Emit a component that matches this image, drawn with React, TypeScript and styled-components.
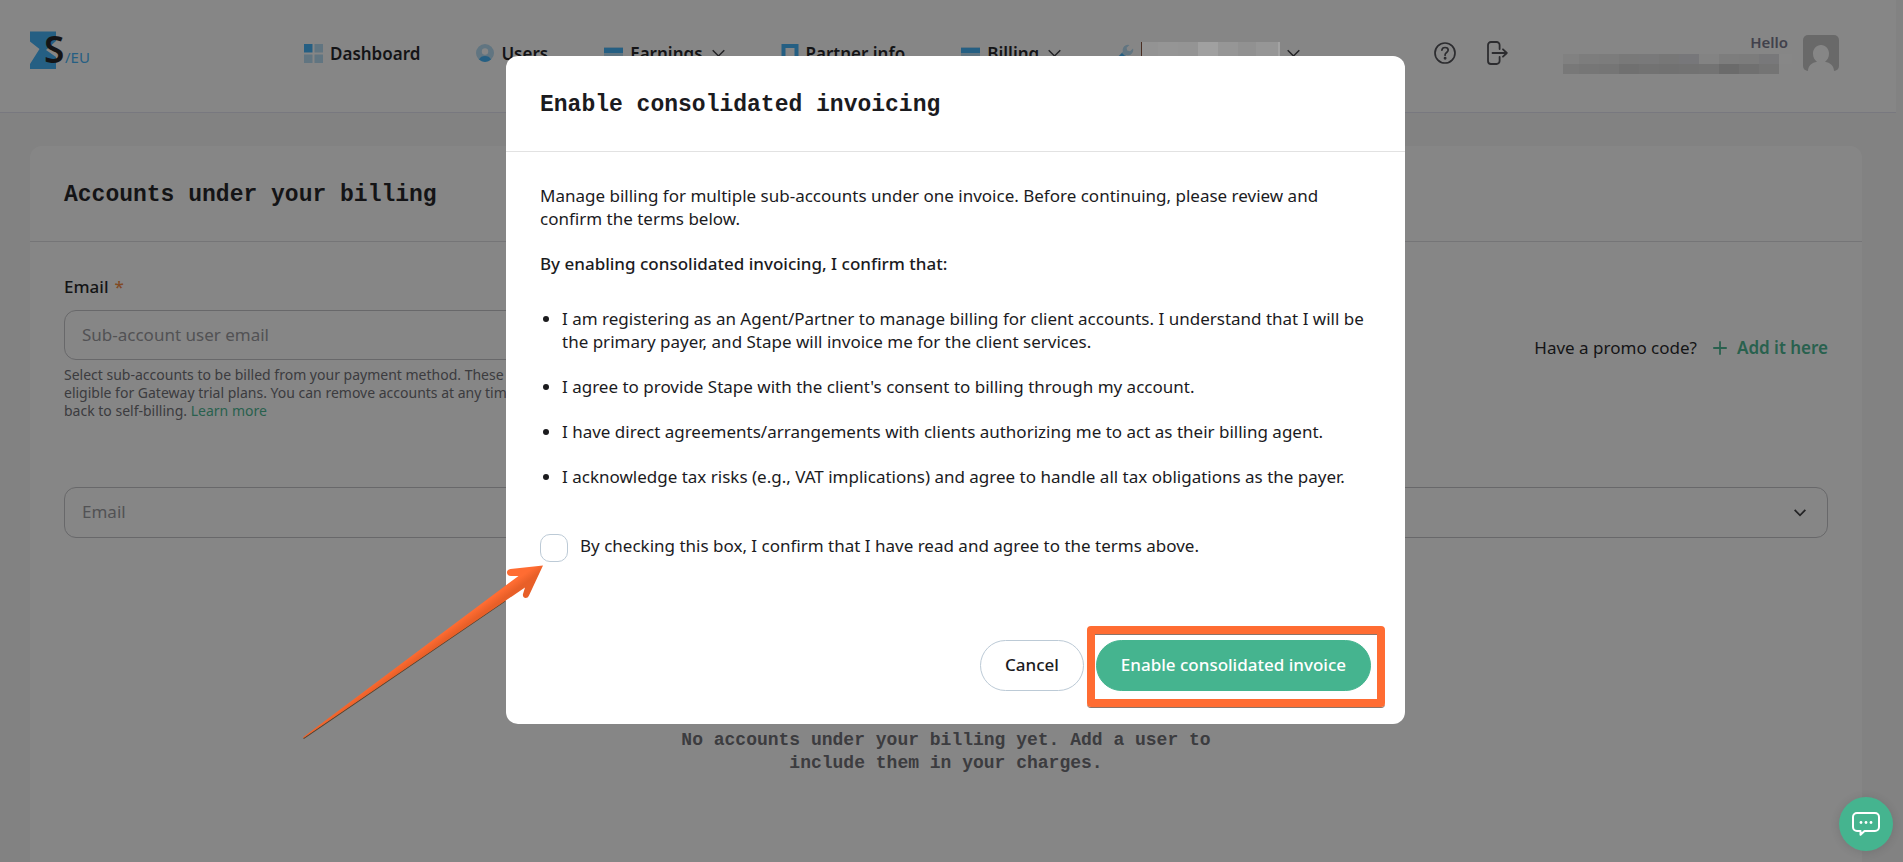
import React, { useState } from 'react';
import styled, { createGlobalStyle } from 'styled-components';

const sans = '"Noto Sans", "Open Sans", sans-serif';
const mono = '"Liberation Mono", "DejaVu Sans Mono", monospace';
const ink = '#1b1b1e';
const green = '#45b48f';
const orange = '#ff6c32';
const blue = '#3cb0f8';
const paleBlue = '#b4dcf4';

const GlobalStyle = createGlobalStyle`
  *, *::before, *::after { box-sizing: border-box; }
  body {
    margin: 0;
    background: #f7f7f7;
    color: ${ink};
    font: 400 17px/23px ${sans};
  }
  button, input, select { font: inherit; color: inherit; }
  button { cursor: pointer; }
  p, h1, h2, ul { margin: 0; padding: 0; }
  a { color: inherit; text-decoration: none; }
  svg { display: block; flex: none; }
`;

const Page = styled.div`
  display: flex;
  flex-direction: column;
  min-height: 100vh;
  padding-right: 7px;
`;

const TopBar = styled.header`
  display: flex;
  align-items: center;
  height: 113px;
  padding: 0 57px 6px 30px;
  background: #fff;
  border-bottom: 1px solid #e2e2f0;
`;

const Nav = styled.nav`
  display: flex;
  align-items: center;
  gap: 56px;
  margin-left: 210px;
`;

const NavLink = styled.a`
  display: flex;
  align-items: center;
  gap: 7px;
  font-weight: 600;
  white-space: nowrap;
`;

const NavLabel = styled.span<{ $open?: boolean }>`
  margin-right: ${(p) => (p.$open ? '2px' : '0')};
`;

const Tools = styled.div`
  display: flex;
  align-items: center;
  gap: 29px;
  margin-left: auto;
`;

const IconButton = styled.button`
  display: grid;
  place-items: center;
  padding: 0;
  border: 0;
  background: none;
`;

const User = styled.div`
  display: flex;
  align-items: center;
  gap: 11px;
  margin-left: 26px;
`;

const UserText = styled.div`
  display: grid;
  gap: 3px;
`;

const Hello = styled.span`
  padding-right: 4px;
  font-size: 15px;
  line-height: 18px;
  font-weight: 600;
  color: #75758a;
  text-align: right;
`;

/* Pixelated strip over private text; it stays above the dimmed backdrop. */
const Mosaic = styled.span<{ $rows: number; $h: number }>`
  position: relative;
  z-index: 15;
  display: grid;
  grid-auto-flow: column;
  grid-template-rows: repeat(${(p) => p.$rows}, ${(p) => p.$h}px);
`;

const Tile = styled.span<{ $w: number; $c: string }>`
  width: ${(p) => p.$w}px;
  background: ${(p) => p.$c};
`;

const Card = styled.main`
  display: flex;
  flex: 1;
  flex-direction: column;
  margin: 33px 34px 0 30px;
  background: #fff;
  border-radius: 12px 12px 0 0;
`;

const PanelHead = styled.div<{ $line: string }>`
  display: flex;
  align-items: center;
  height: 96px;
  padding: 2px 34px 0;
  border-bottom: 1px solid ${(p) => p.$line};
`;

const Title = styled.h2`
  font: 700 23px/30px ${mono};
`;

const CardBody = styled.div`
  padding: 33px 34px 24px;
`;

const FormRow = styled.div`
  display: flex;
  align-items: center;
  justify-content: space-between;
  gap: 40px;
`;

const Field = styled.div`
  display: flex;
  flex-direction: column;
  width: 50%;
`;

const Label = styled.label`
  display: flex;
  gap: 6px;
  margin-bottom: 12px;
  font-weight: 500;
`;

const Star = styled.span`
  color: #f5873c;
`;

const TextInput = styled.input`
  height: 50px;
  padding: 0 17px 2px;
  border: 1px solid #c2c2c6;
  border-radius: 12px;
  background: none;
  &::placeholder { color: #96969b; opacity: 1; }
`;

const Hint = styled.p`
  margin-top: 6px;
  font-size: 14px;
  line-height: 18px;
  color: #6a6a70;
  white-space: nowrap;
`;

const GreenLink = styled.a`
  color: ${green};
`;

const Promo = styled.div`
  display: flex;
  align-items: center;
  gap: 16px;
  white-space: nowrap;
`;

const AddButton = styled.button`
  display: flex;
  align-items: center;
  gap: 10px;
  padding: 0;
  border: 0;
  background: none;
  color: ${green};
  font-weight: 600;
`;

const SelectWrap = styled.div`
  display: grid;
  align-items: center;
  margin-top: 67px;
  > * { grid-area: 1 / 1; }
  > svg { justify-self: end; margin-right: 22px; pointer-events: none; }
`;

const Select = styled.select`
  height: 51px;
  padding: 0 17px 2px;
  border: 1px solid #c2c2c6;
  border-radius: 12px;
  background: none;
  color: #96969b;
  appearance: none;
`;

const Empty = styled.p`
  max-width: 560px;
  margin: 191px auto 0;
  font: 700 18px/23px ${mono};
  color: #6a6a70;
  text-align: center;
`;

const Backdrop = styled.div`
  position: fixed;
  inset: 0;
  z-index: 10;
  background: rgba(13, 13, 13, 0.5);
`;

const ModalLayer = styled.div`
  position: fixed;
  inset: 0;
  z-index: 20;
  display: flex;
  align-items: flex-start;
  justify-content: center;
  padding: 56px 0 0 8px;
`;

const Modal = styled.section`
  position: relative;
  width: 899px;
  max-width: 100%;
  background: #fff;
  border-radius: 12px;
`;

const ModalBody = styled.div`
  padding: 32px 34px 33px;
`;

const Lead = styled.p`
  margin-top: 22px;
  font-weight: 500;
`;

const Terms = styled.ul`
  display: grid;
  gap: 22px;
  margin-top: 32px;
  list-style: none;
`;

const Term = styled.li`
  display: flex;
  gap: 13px;
  padding-left: 3px;
  &::before {
    content: '';
    flex: none;
    width: 6px;
    height: 6px;
    margin-top: 9px;
    border-radius: 50%;
    background: ${ink};
  }
`;

const Consent = styled.label`
  display: flex;
  align-items: flex-start;
  gap: 12px;
  margin-top: 46px;
`;

const Checkbox = styled.input`
  width: 28px;
  height: 28px;
  margin: 0;
  border: 1px solid #bccad6;
  border-radius: 10px;
  background: #fff;
  appearance: none;
  &:checked { background: ${green}; border-color: ${green}; }
`;

const Actions = styled.div`
  display: flex;
  justify-content: flex-end;
  gap: 12px;
  margin-top: 78px;
`;

const PillButton = styled.button<{ $primary?: boolean }>`
  height: 51px;
  padding: 0 24px 2px;
  border: 1px solid ${(p) => (p.$primary ? green : '#bccad6')};
  border-radius: 26px;
  background: ${(p) => (p.$primary ? green : '#fff')};
  color: ${(p) => (p.$primary ? '#fff' : ink)};
  font-weight: 500;
`;

const Highlighted = styled.div`
  position: relative;
  &::after {
    content: '';
    position: absolute;
    inset: -14px -14px -16px -9px;
    border: 8px solid ${orange};
    border-radius: 4px;
    box-shadow: 0 1px 0 #8c7468, inset 0 1px 0 #8c7468;
    pointer-events: none;
  }
`;

const Pointer = styled.svg`
  position: absolute;
  left: -206px;
  top: 504px;
  pointer-events: none;
`;

const ChatButton = styled.button`
  position: fixed;
  right: 10px;
  bottom: 11px;
  z-index: 30;
  display: grid;
  place-items: center;
  width: 54px;
  height: 54px;
  padding: 0;
  border: 0;
  border-radius: 50%;
  background: ${green};
  box-shadow: 0 1px 10px rgba(0, 0, 0, 0.12);
`;

const Logo = () => (
  <svg width="64" height="66" viewBox="0 -8 64 66" role="img" aria-label="Stape EU">
    <path d="M0 3.500h26v37.500H0v-5l9.500-15L0 13.500z" fill={blue} />
    <path d="M26 13l-10 9 10 7z" fill="#fff" />
    <text x="14" y="35" fontFamily="Noto Sans" fontWeight="600" fontSize="37" fill={ink}>S</text>
    <text x="35" y="35" fontFamily="Noto Sans" fontSize="15" fill={blue}>/EU</text>
  </svg>
);

const DashboardIcon = () => (
  <svg width="19" height="19" viewBox="0 0 19 19">
    <path d="M0 0h8.500v8.500H0z" fill={blue} />
    <path d="M10.500 0H19v8.500h-8.500zM0 10.500h8.500V19H0zM10.500 10.500H19V19h-8.500z" fill={paleBlue} />
  </svg>
);

const UsersIcon = () => (
  <svg width="18" height="18" viewBox="0 0 18 18">
    <circle cx="9" cy="9" r="9" fill={paleBlue} />
    <circle cx="9" cy="7.500" r="3.200" fill="#fff" />
    <path d="M3 15.600C4 13 6.300 12 9 12s5 1 6 3.600A9 9 0 0 1 3 15.600z" fill={blue} />
  </svg>
);

const CardIcon = () => (
  <svg width="19" height="19" viewBox="0 0 19 19">
    <path d="M0 3h19v14H0z" fill={paleBlue} />
    <path d="M0 4h19v5H0z" fill={blue} />
    <path d="M10 12h6v2h-6z" fill="#fff" />
  </svg>
);

const PartnerIcon = () => (
  <svg width="18" height="18" viewBox="0 0 18 18">
    <path d="M2.500 2h13v14h-13z" fill="none" stroke={blue} strokeWidth="4" />
  </svg>
);

const WrenchIcon = () => (
  <svg width="17" height="18" viewBox="0 0 17 18">
    <path
      d="M12.500 1a5.200 5.200 0 0 0-6.600 6.500L1 12.500 4.500 16l5-4.900A5.200 5.200 0 0 0 16 4.600l-3 2.600-2.800-.700-.600-2.800z"
      fill={paleBlue}
    />
    <path d="M5 9l3.500 3.500-4 4L1 13z" fill={blue} />
  </svg>
);

const Chevron = ({ size = 13, weight = 1.5 }: { size?: number; weight?: number }) => (
  <svg width={size} height={size} viewBox="0 0 13 13" fill="none" stroke="#3a3a3e" strokeWidth={weight}>
    <path d="M.7 3.200l5.800 5.800 5.800-5.800" />
  </svg>
);

const HelpIcon = () => (
  <svg width="24" height="24" viewBox="0 0 24 24" fill="none" stroke="#4a4a50" strokeWidth="1.700" strokeLinecap="round">
    <circle cx="12" cy="12" r="10" />
    <path d="M8.900 9.200c.2-1.800 1.400-2.700 3.100-2.700 1.800 0 3.200 1 3.200 2.600 0 2.400-3.100 2.300-3.100 4.700v.4" />
    <circle cx="12.100" cy="17.300" r=".6" fill="#4a4a50" />
  </svg>
);

const LogoutIcon = () => (
  <svg width="22" height="24" viewBox="0 0 22 24" fill="none" stroke="#4a4a50" strokeWidth="1.800" strokeLinecap="round" strokeLinejoin="round">
    <path d="M13.600 8V4a3 3 0 0 0-3-3H5a3 3 0 0 0-3 3v16a3 3 0 0 0 3 3h5.600a3 3 0 0 0 3-3v-4M6.500 12h14.300M17 8.300l3.800 3.700L17 15.700" />
  </svg>
);

const Avatar = () => (
  <svg width="36" height="36" viewBox="0 0 36 36" role="img" aria-label="Profile">
    <rect width="36" height="36" rx="5" fill="#c5c5c5" />
    <path d="M18 10c4.500 0 8 3.700 8 8.500 0 4-1.700 6.600-4 8.200 5 .9 9 4 9 9.300H5c0-5.300 4-8.400 9-9.300-2.300-1.600-4-4.200-4-8.200C10 13.700 13.500 10 18 10z" fill="#fff" />
  </svg>
);

const PlusIcon = () => (
  <svg width="14" height="14" viewBox="0 0 14 14" stroke={green} strokeWidth="1.800" strokeLinecap="round">
    <path d="M7 .9v12.200M.9 7h12.200" />
  </svg>
);

const ChatIcon = () => (
  <svg width="28" height="24" viewBox="0 0 28 24" fill="none" stroke="#fff" strokeWidth="2" strokeLinejoin="round">
    <path d="M5 1h18a4 4 0 0 1 4 4v10a4 4 0 0 1-4 4H12.500L8.500 22.800V19H5a4 4 0 0 1-4-4V5a4 4 0 0 1 4-4z" />
    <g fill="#fff" stroke="none">
      <circle cx="9" cy="10.500" r="1.400" />
      <circle cx="14" cy="10.500" r="1.400" />
      <circle cx="19" cy="10.500" r="1.400" />
    </g>
  </svg>
);

const navItems = [
  { label: 'Dashboard', icon: <DashboardIcon /> },
  { label: 'Users', icon: <UsersIcon /> },
  { label: 'Earnings', icon: <CardIcon />, menu: true },
  { label: 'Partner info', icon: <PartnerIcon /> },
  { label: 'Billing', icon: <CardIcon />, menu: true },
];

const menuTiles: [number, string][] = [
  [1, '#4a2e22'], [16, '#939393'], [20, '#959595'], [20, '#949494'], [20, '#a0a0a0'],
  [20, '#969696'], [18, '#919191'], [22, '#969696'], [2, '#a3a3a3'],
];

const userTiles: [number, string, string][] = [
  [16, '#818181', '#787878'], [20, '#7d7d7d', '#767676'], [20, '#7c7c7c', '#757575'],
  [20, '#797979', '#707070'], [20, '#79797a', '#727272'], [20, '#777777', '#717171'],
  [20, '#77777a', '#727272'], [20, '#838383', '#737373'], [20, '#7d7d7d', '#6b6b6b'],
  [20, '#7c7c7c', '#707070'], [20, '#78787a', '#747474'], [13, '#878787', '#868686'],
];

const terms = [
  'I am registering as an Agent/Partner to manage billing for client accounts. I understand that I will be the primary payer, and Stape will invoice me for the client services.',
  "I agree to provide Stape with the client's consent to billing through my account.",
  'I have direct agreements/arrangements with clients authorizing me to act as their billing agent.',
  'I acknowledge tax risks (e.g., VAT implications) and agree to handle all tax obligations as the payer.',
];

export default function App() {
  const [agreed, setAgreed] = useState(false);

  return (
    <>
      <GlobalStyle />
      <Page>
        <TopBar>
          <a href="#home"><Logo /></a>
          <Nav>
            {navItems.map((item) => (
              <NavLink key={item.label} href="#section">
                {item.icon}
                <NavLabel $open={item.menu}>{item.label}</NavLabel>
                {item.menu && <Chevron />}
              </NavLink>
            ))}
            <NavLink href="#tools" aria-label="Tools">
              <WrenchIcon />
              <Mosaic $rows={1} $h={22}>
                {menuTiles.map(([w, c], i) => <Tile key={i} $w={w} $c={c} />)}
              </Mosaic>
              <Chevron />
            </NavLink>
          </Nav>
          <Tools>
            <IconButton aria-label="Help"><HelpIcon /></IconButton>
            <IconButton aria-label="Log out"><LogoutIcon /></IconButton>
            <User>
              <UserText>
                <Hello>Hello</Hello>
                <Mosaic $rows={2} $h={10}>
                  {userTiles.map(([w, top, bottom], i) => (
                    <React.Fragment key={i}>
                      <Tile $w={w} $c={top} />
                      <Tile $w={w} $c={bottom} />
                    </React.Fragment>
                  ))}
                </Mosaic>
              </UserText>
              <Avatar />
            </User>
          </Tools>
        </TopBar>

        <Card>
          <PanelHead $line="#dddde0">
            <Title as="h1">Accounts under your billing</Title>
          </PanelHead>
          <CardBody>
            <FormRow>
              <Field>
                <Label htmlFor="sub-email">Email <Star>*</Star></Label>
                <TextInput id="sub-email" type="email" placeholder="Sub-account user email" />
                <Hint>
                  Select sub-accounts to be billed from your payment method. These<br />
                  eligible for Gateway trial plans. You can remove accounts at any time<br />
                  back to self-billing. <GreenLink href="#learn">Learn more</GreenLink>
                </Hint>
              </Field>
              <Promo>
                <span>Have a promo code?</span>
                <AddButton><PlusIcon />Add it here</AddButton>
              </Promo>
            </FormRow>
            <SelectWrap>
              <Select aria-label="Email" defaultValue="">
                <option value="">Email</option>
              </Select>
              <Chevron size={12} weight={2} />
            </SelectWrap>
            <Empty>No accounts under your billing yet. Add a user to include them in your charges.</Empty>
          </CardBody>
        </Card>
      </Page>

      <Backdrop />
      <ModalLayer>
        <Modal role="dialog" aria-modal="true" aria-labelledby="modal-title">
          <PanelHead $line="#e2e2e2">
            <Title id="modal-title">Enable consolidated invoicing</Title>
          </PanelHead>
          <ModalBody>
            <p>
              Manage billing for multiple sub-accounts under one invoice. Before continuing, please review and
              confirm the terms below.
            </p>
            <Lead>By enabling consolidated invoicing, I confirm that:</Lead>
            <Terms>
              {terms.map((term) => <Term key={term}>{term}</Term>)}
            </Terms>
            <Consent>
              <Checkbox type="checkbox" checked={agreed} onChange={(e) => setAgreed(e.target.checked)} />
              By checking this box, I confirm that I have read and agree to the terms above.
            </Consent>
            <Actions>
              <PillButton>Cancel</PillButton>
              <Highlighted>
                <PillButton $primary>Enable consolidated invoice</PillButton>
              </Highlighted>
            </Actions>
          </ModalBody>
          <Pointer width="245" height="182" viewBox="0 0 245 182" aria-hidden="true">
            <defs>
              <linearGradient id="shaft" gradientUnits="userSpaceOnUse" x1="116" y1="84" x2="126" y2="98">
                <stop offset="0.350" stopColor={orange} />
                <stop offset="0.800" stopColor="#e85f28" />
              </linearGradient>
            </defs>
            <path d="M3.500 178.500L205 41" fill="none" stroke="#57432f" strokeWidth="1.500" />
            <path
              d="M243 5.500L210.500 9c-5 .7-4.600 7 .5 7h7.500L3 177.300l.6.7L225 27.500l-2 6.500c-1 4.500 4.500 5.500 6 1.500z"
              fill="url(#shaft)"
            />
          </Pointer>
        </Modal>
      </ModalLayer>

      <ChatButton aria-label="Open chat"><ChatIcon /></ChatButton>
    </>
  );
}
